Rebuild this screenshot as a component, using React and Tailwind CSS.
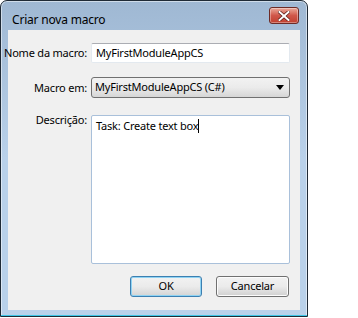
// Windows 7 style "Criar nova macro" dialog

const font = { fontFamily: '"Segoe UI", "Noto Sans", "Open Sans", sans-serif' };

const CloseButton = () => (
  <div className="w-[30px] h-[17px] rounded-[3px] border border-[#6d2b26] bg-gradient-to-b from-[#e9a99a] via-[#d0574a] to-[#c0402f] flex items-center justify-center shadow-[inset_0_0_0_1px_rgba(255,255,255,0.35)]">
    <svg width="12" height="10" viewBox="0 0 12 10">
      <path d="M1.5 1 L10.5 9 M10.5 1 L1.5 9" stroke="#5a1f1a" strokeWidth="3.4" strokeLinecap="square" />
      <path d="M1.5 1 L10.5 9 M10.5 1 L1.5 9" stroke="#ffffff" strokeWidth="2" strokeLinecap="square" />
    </svg>
  </div>
);

const Label = ({ children, className = "" }) => (
  <div className={`w-[79px] shrink-0 flex justify-end whitespace-nowrap text-[11px] tracking-[-0.2px] text-black leading-[16px] ${className}`}>
    {children}
  </div>
);

const App = () => {
  return (
    <div className="w-[358px] h-[318px] bg-white" style={font}>
      <div className="w-[308px] h-[317px] rounded-t-[7px] border border-[#1f2a36] bg-gradient-to-b from-[#9fb8d3] via-[#b9d1ea] to-[#b9d1ea] flex flex-col shadow-[inset_0_0_0_1px_rgba(255,255,255,0.5)]">
        {/* Title bar */}
        <div className="h-[29px] shrink-0 flex items-center justify-between pl-[11px] pr-[8px]">
          <span className="text-[12px] tracking-[-0.2px] text-black pt-[8px]">Criar nova macro</span>
          <CloseButton />
        </div>

        {/* Client area */}
        <div className="mx-[7px] h-[280px] shrink-0 bg-[#f0f0f0] flex flex-col text-[11px] tracking-[-0.2px]">
          {/* Nome da macro */}
          <div className="h-[20px] flex items-center gap-[4px] mt-[13px]">
            <Label>Nome da macro:</Label>
            <div className="w-[199px] h-[20px] bg-white border border-[#e3e9ef] border-t-[#abadb3] rounded-[2px] flex items-center px-[4px] text-black">
              MyFirstModuleAppCS
            </div>
          </div>

          {/* Macro em */}
          <div className="h-[21px] flex items-center gap-[4px] mt-[14px]">
            <Label>Macro em:</Label>
            <div className="w-[199px] h-[21px] rounded-[3px] border border-[#707070] bg-gradient-to-b from-[#f2f2f2] via-[#ebebeb] to-[#d6d6d6] flex items-center justify-between pl-[3px] pr-[5px] text-black">
              <span>MyFirstModuleAppCS (C#)</span>
              <svg width="8" height="5" viewBox="0 0 8 5">
                <path d="M0 0 H8 L4 5 Z" fill="#000" />
              </svg>
            </div>
          </div>

          {/* Descricao */}
          <div className="h-[149px] flex items-start gap-[4px] mt-[17px]">
            <Label className="-mt-[3px]">Descrição:</Label>
            <div className="w-[199px] h-[149px] bg-white border border-[#a9c0da] rounded-[2px] px-[4px] pt-[2px] text-black leading-[16px]">
              <span>Task: Create text box</span>
              <span className="inline-block w-[1px] h-[14px] bg-black align-middle -mt-[2px]" />
            </div>
          </div>

          {/* Buttons */}
          <div className="h-[21px] flex mt-[12px] pl-[122px] gap-[14px]">
            <div className="w-[72px] h-[21px] rounded-[3px] border border-[#3c7fb1] bg-gradient-to-b from-[#f2f2f2] via-[#ebebeb] to-[#d4d4d4] shadow-[inset_0_0_0_1px_#8fd3f3] flex items-center justify-center text-black">
              OK
            </div>
            <div className="w-[73px] h-[21px] rounded-[3px] border border-[#707070] bg-gradient-to-b from-[#f2f2f2] via-[#ebebeb] to-[#d0d0d0] shadow-[inset_0_0_0_1px_#fcfcfc] flex items-center justify-center text-black">
              Cancelar
            </div>
          </div>
        </div>

        <div className="flex-1" />
        <div className="h-[1px] shrink-0 bg-[#3ec6e6]" />
      </div>
    </div>
  );
};

export default App;
